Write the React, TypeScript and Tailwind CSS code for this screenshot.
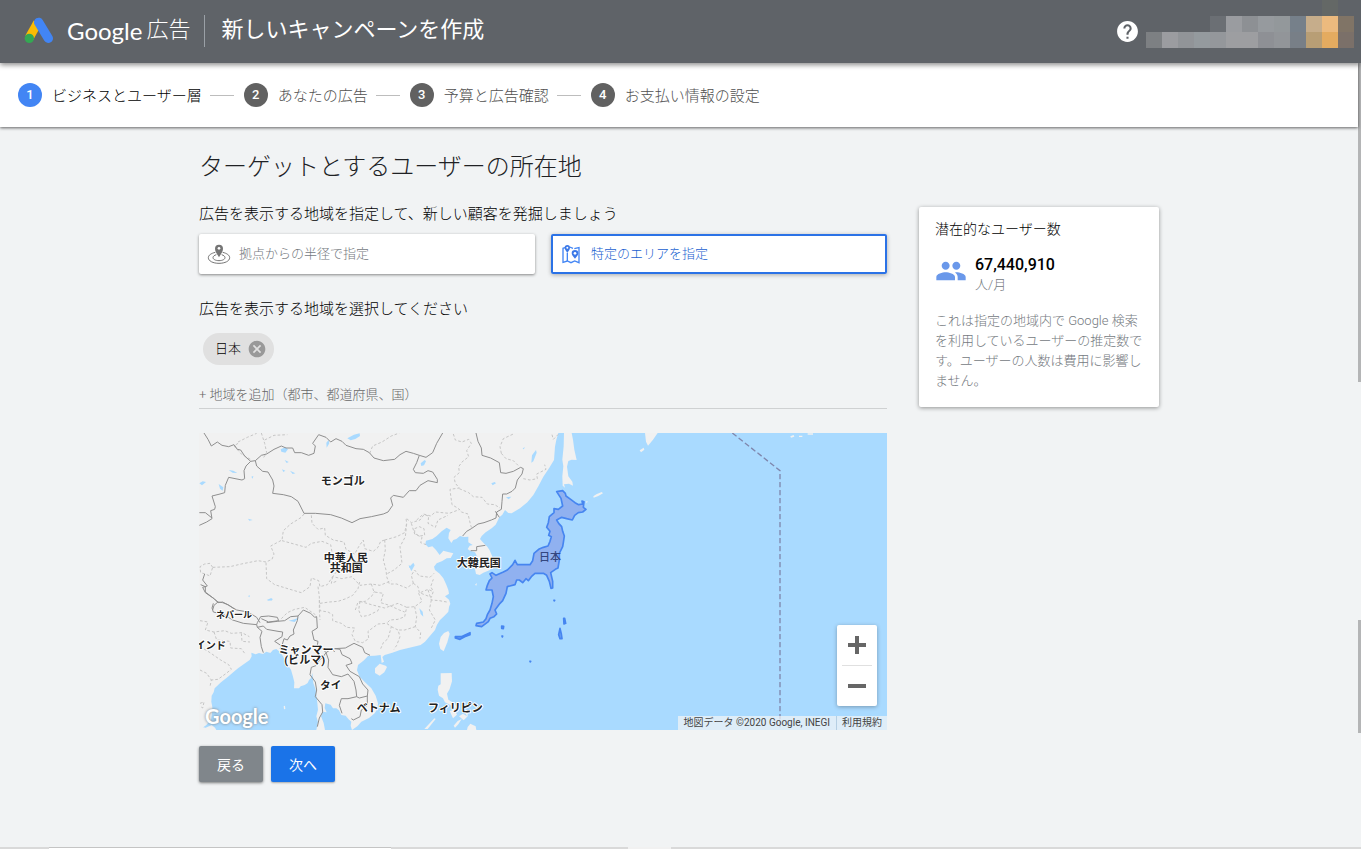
import { Fragment } from 'react'
import { MdCancel, MdHelp, MdPeople } from 'react-icons/md'

const steps = ['ビジネスとユーザー層', 'あなたの広告', '予算と広告確認', 'お支払い情報の設定']

// account area, shown as coloured tiles
const accountTiles = [
  ['bg-transparent', 'bg-transparent', 'bg-[#7d8083]'],
  ['bg-transparent', 'bg-transparent', 'bg-[#9b9ca0]'],
  ['bg-transparent', 'bg-transparent', 'bg-[#919498]'],
  ['bg-transparent', 'bg-transparent', 'bg-[#949a9e]'],
  ['bg-transparent', 'bg-[#6b6f74]', 'bg-[#94979b]'],
  ['bg-transparent', 'bg-[#9a9ca0]', 'bg-[#9d9ea1]'],
  ['bg-transparent', 'bg-[#8d9094]', 'bg-[#9d9ea1]'],
  ['bg-transparent', 'bg-[#969a9e]', 'bg-[#8e9095]'],
  ['bg-transparent', 'bg-[#93989b]', 'bg-[#929599]'],
  ['bg-transparent', 'bg-[#76808a]', 'bg-[#787f87]'],
  ['bg-transparent', 'bg-[#c6ad8b]', 'bg-[#b89e75]'],
  ['bg-[#646866]', 'bg-[#ecba7e]', 'bg-[#e4ab60]'],
  ['bg-transparent', 'bg-[#807466]', 'bg-[#7b7069]'],
]

const AdsLogo = () => (
  <svg width="32" height="30" viewBox="0 0 96 90" aria-hidden="true">
    <path d="M44 20 19 65" stroke="#fbbc04" strokeWidth="27" />
    <circle cx="19" cy="67" r="14" fill="#34a853" />
    <path d="M47 19 76 67" stroke="#4285f4" strokeWidth="28" strokeLinecap="round" />
  </svg>
)

const RadiusIcon = () => (
  <svg width="24" height="24" viewBox="0 0 72 72" fill="none" stroke="#757575" strokeWidth="3" aria-hidden="true">
    <path d="M25 31C12 34 4 40 4 47c0 10 14 17 32 17s32-7 32-17c0-7-8-13-21-16" />
    <path d="M28 38c-6 2-10 5-10 9 0 5 8 9 18 9s18-4 18-9c0-4-4-7-10-9" />
    <path d="M36 46C30 36 24 28 24 20a12 12 0 0 1 24 0c0 8-6 16-12 26z" fill="#757575" stroke="none" />
    <circle cx="36" cy="19" r="4" fill="#fff" stroke="none" />
  </svg>
)

const AreaIcon = () => (
  <svg width="24" height="24" viewBox="0 0 72 72" fill="none" stroke="#4285f4" strokeWidth="4" aria-hidden="true">
    <path d="M18 17 12 19V61L25 57 36 62 47 57 60 62V17L49 19 46 20M32 15 42 19" />
    <path d="M25 32V57" />
    <path d="M25 32C20 26 17 21 17 17a8 8 0 0 1 16 0c0 4-3 9-8 15z" fill="#3b78e7" stroke="none" />
    <circle cx="25" cy="17" r="3" fill="#fff" stroke="none" />
    <path d="M48 50C42 43 38 39 38 34a10 10 0 0 1 20 0c0 5-4 9-10 16z" fill="#3b78e7" stroke="none" />
    <circle cx="48" cy="34" r="4" fill="#fff" stroke="none" />
  </svg>
)

const mapLabels = [
  { text: 'モンゴル', x: 431, y: 144, size: 33 },
  { text: '中華人民', x: 440, y: 376, size: 33 },
  { text: '共和国', x: 442, y: 406, size: 33 },
  { text: '大韓民国', x: 839, y: 391, size: 33 },
  { text: 'ネパール', x: 105, y: 546, size: 27 },
  { text: 'インド', x: 35, y: 638, size: 31 },
  { text: 'ミャンマー', x: 321, y: 652, size: 33 },
  { text: '(ビルマ)', x: 317, y: 681, size: 33 },
  { text: 'タイ', x: 395, y: 757, size: 32 },
  { text: 'ベトナム', x: 539, y: 825, size: 33 },
  { text: 'フィリピン', x: 769, y: 825, size: 33 },
]

const MapDrawing = () => (
  <svg className="block h-full w-full" viewBox="0 0 2064 891" preserveAspectRatio="xMinYMid slice" role="img" aria-label="地図">
    <rect width="2064" height="891" fill="#a9daff" />

    {/* land */}
    <g fill="#f1f1f1">
      <path d="M0 0H1078L1072 20 1068 41 1065 81 1050 106 1033 131 1018 160 1003 186 985 208 963 226 938 241 928 240 918 231 910 245 901 253 890 275 878 286 860 298 848 309 843 318 850 326 865 341 872 352 878 366 883 380 883 396 873 411 853 419 842 426 831 423 828 408 833 391 835 371 828 358 813 353 806 348 812 338 821 336 808 328 808 311 795 312 783 309 772 318 763 321 757 330 748 316 750 300 755 291 743 284 728 295 713 309 700 318 681 323 679 334 688 343 700 340 711 351 722 366 733 353 750 358 763 361 755 375 743 376 730 384 713 391 705 401 708 411 722 422 733 436 742 455 748 471 750 482 738 490 750 500 754 512 750 522 748 536 735 550 723 561 714 575 708 591 692 610 678 626 665 636 653 639 628 645 603 651 580 659 557 666 550 672 555 686 548 690 545 666 527 668 507 669 495 682 477 696 474 712 482 731 498 748 517 766 530 788 537 811 535 828 527 841 510 855 487 866 475 880 459 891 455 878 457 866 448 858 440 848 427 846 420 832 412 826 402 826 395 815 379 811 377 825 383 838 370 836 366 850 374 870 378 891H352L357 868 352 850 357 830 354 800 350 770 343 750 340 720 336 735 330 741 326 750 317 756 305 760 300 766H285L286 748 282 731 276 710 259 686 252 670 242 656 232 648 222 651 214 660 202 656 192 663 180 660 170 664 157 659 158 670 152 681 135 693 117 706 100 720 87 731 66 748 47 766 44 778 38 788 37 806 40 822 39 841 36 860 22 876 5 889 0 891z" />
      <path d="M1095 0H1118L1122 20 1126 50 1133 81 1118 80 1108 84 1104 101 1108 130 1120 146 1122 158 1110 152 1095 154 1098 164 1091 158 1090 130 1093 100 1090 80 1094 40z" />
      <path d="M1183 190 1192 184 1208 177 1212 181 1198 189 1184 194zM1160 206 1166 204 1164 210zM1228 168 1236 164" />
      <path d="M1338 0H1376L1362 20 1347 38 1341 26zM1322 52 1334 44 1336 50 1326 58zM1774 10 1784 6 1786 11 1776 14zM1800 8h10v4h-10zM1826 1h16v4h-16z" />
      <path d="M748 594 752 602 745 628 734 655 724 648 720 632 725 612 735 600z" />
      <path d="M528 706 542 692 560 698 564 702 556 718 542 728 528 720z" />
      <path d="M725 721 758 720 759 745 752 768 744 782 748 800 758 806 768 812 774 826 762 822 750 814 738 808 732 796 720 788 716 770 718 758 725 754z" />
      <path d="M752 834 766 830 774 845 762 856zM780 850 792 842 804 850 798 838 806 832 806 850 794 862zM764 878 776 864 788 858 778 874 768 884zM806 882 814 872 830 880 832 891H804zM676 888 706 856 710 858 686 888z" />
      <path d="M0 880 20 884 38 876 48 884 52 891H0z" />
      <path d="M254 820 258 818 259 828 255 829zM828 455 834 450 832 458z" />
    </g>

    {/* lakes */}
    <g fill="#a9daff" transform="translate(-3 -9)">
      <path d="M448 25 468 14 485 10 486 18 472 27 458 31zM385 38 392 30 394 40 386 53zM248 58 262 52 270 58 262 68 250 65zM260 90 272 96 266 99zM252 118 262 122 256 126zM276 122 292 130 284 132zM92 120 106 122 118 129 104 128zM62 162 76 172 74 182 66 176zM4 160 14 154 24 156 12 166zM160 140 166 138 164 146zM668 100 680 90 684 94 678 106 670 108zM150 266 164 270 154 272z" />
      <path d="M634 410 646 398 650 406 640 424zM632 404 640 412 634 414zM150 498 156 496 154 502zM206 510 220 504 224 510 212 512z" />
      <path d="M1002 76 1014 60 1016 68 1006 94 1000 98zM880 160 890 156 894 160 884 166zM924 202 940 200 932 208zM974 56 980 50 978 58zM664 535 674 545 676 560 668 552z" />
      <path d="M272 572 290 568 304 562 290 576zM212 508 224 506 220 512z" />
    </g>

    {/* prefecture and province lines */}
    <g fill="none" stroke="#c6c6c6" strokeWidth="3" strokeDasharray="8 6">
      <g transform="translate(-3 -9)">
        <path d="M190 9 200 40 206 68 196 84M120 40 108 48 132 74 158 88M120 36 148 22 176 10M200 30 228 16 268 14M515 70 524 48 552 36 580 18 604 9" />
        <path d="M318 252 310 262 278 282 256 302 252 330 218 348 228 372 222 388 204 396M204 396 180 392 130 402 96 410 44 412M340 256 342 280 360 298 380 294 382 316 406 330 438 336 444 358 470 372 482 350 496 330 500 356 526 364 540 352 548 334 560 330M252 332 288 342 324 352 340 340 372 334 398 344 402 366 412 380" />
        <path d="M204 398 206 446 230 464 276 478 310 488 336 470 340 444 362 452 366 470 388 464 404 440 432 446 462 440 486 466 520 462 546 466 580 452M560 330 562 360 556 390 564 420 566 440 574 462 596 462 626 474 646 460M560 330 596 320 620 308 626 280 624 264 640 278 666 270 678 254 692 258 690 280 712 292 720 270 750 256M626 282 622 320 606 350 612 400 588 420 566 432M650 296 664 290 678 296 680 316 664 318 650 310zM640 280 650 312 672 322 668 338 684 344" />
        <path d="M404 440 400 460 420 452M520 462 528 486 556 490 548 518 574 526 604 540 620 546M472 540 480 516 502 514 520 500 530 484M646 460 640 436 650 420 664 438 696 442 708 430M646 460 660 470 664 488 700 502 706 484 698 470 706 448M360 470 364 500 364 540 366 570M44 412 36 400 20 402 6 410 8 428 22 432 36 438 44 412M412 380 430 400 420 420 404 440" />
      </g>
      <g transform="translate(-3 441)">
        <path d="M364 60 366 92 390 96 404 104 404 122 430 130 446 142 470 144 462 164 472 184 494 188 512 176 510 154 540 132 566 130 580 140 570 176 556 188 548 206M366 70 394 66 420 64 444 56 464 46 480 26 486 2M486 64 520 74 560 84 600 70 626 82 620 110 600 118 576 120 566 130M486 64 482 90 490 110 512 106 540 92 544 80M580 140 600 150 606 170 596 196 588 208M626 82 650 80 672 64 662 40 690 28 704 34M650 80 656 110 652 140 668 158 666 176M690 30 700 60 724 62 746 66M652 140 620 150 600 150M700 60 694 90 712 120 700 144" />
        <path d="M6 122 30 126 22 150 48 156 80 152 100 160 132 158 154 170M48 156 56 180 96 184 98 204 130 206 140 220M6 200 30 214 68 240 92 254 100 268 82 282 60 298 40 300M6 270 26 280 40 300 36 320M130 160 132 184 156 186M6 370 18 366 14 384 8 380M250 116 268 98 290 88 320 82 352 104" />
      </g>
      <g transform="translate(603 -9)">
        <path d="M160 12 166 30 186 36 206 28 214 40 200 62 206 80 186 96 176 110 178 128 162 142 166 160 178 174 150 178 152 196 156 224 176 236 184 246 204 252 212 286 216 296M178 176 206 188 220 200 246 202 262 222 284 224 300 234M304 70 300 50 310 26 340 12M304 70 318 86 340 92 358 110M370 146 390 150 412 146 410 132 438 118 434 104M456 14 460 28 476 12M50 270 70 252 92 258 106 246 148 250 180 238" />
      </g>
    </g>

    {/* country borders */}
    <g fill="none" stroke="#8f8f8f" strokeWidth="3" strokeLinejoin="round">
      <g transform="translate(-3 -9)">
        <path d="M18 9 30 28 40 48 58 36 72 46 92 50 108 44 118 58 128 60 140 78 158 94 172 92 190 76 206 72 228 58 250 48 264 54 284 54 290 68 310 68 332 76 348 70 352 48 344 40 362 14 384 22 398 36 414 26 432 34 444 46 474 56 496 58 514 68 528 84 556 92 590 88 606 74 624 64 646 70 664 76 684 82 704 68 716 40 734 9" />
        <path d="M172 92 176 108 194 124 210 126 224 150 228 168 224 190 256 194 280 200 300 214 318 250 352 250 398 254 430 264 462 278 486 266 520 260 556 252 570 246 584 226 578 204 586 196 616 202 634 182 654 182 666 166 690 152 718 158 718 148 704 126 690 122 676 130 652 128 646 118 656 98 664 76" />
        <path d="M158 94 144 108 138 122 140 146 132 150 92 142 82 166 80 188 66 192 42 198 52 230 50 238 38 242 42 266 26 276 4 286M4 248 22 248 42 264" />
        <path d="M20 432 14 450 28 468 14 472 22 488 48 506 60 516 74 518 90 524 110 538M44 540 48 526 60 516" />
      </g>
      <g transform="translate(-3 441)">
        <path d="M8 14 22 20 22 36 48 56 60 68 74 66 96 78 116 90M46 70 42 84 46 96 78 104 104 120 136 130 176 134 178 128 188 110 212 108 238 112 242 122 212 126 190 116M116 90 150 96 176 112 186 128M176 134 178 142 196 138 206 148 240 154 254 156 252 170 230 184 248 196 248 212M178 142 192 154 186 172 190 200 196 218M206 128 238 124 260 122 278 110 300 108 298 122 286 150 288 162 276 168 268 180 258 176 252 196 246 206" />
        <path d="M300 108 316 90 338 100 350 112 356 110 358 144 342 154 348 180 360 184 358 196 374 206 384 218 402 206 410 216M384 218 374 232 364 240 356 256 340 262 336 284 352 306 356 330 352 350 372 374 374 396 364 414 358 440M384 218 392 240 390 262 404 284 430 290 450 282 468 304 474 330 476 350 450 356 430 356 424 376 432 400 M410 206 426 208 432 224 456 236 462 250 444 256 456 274 484 290 494 312 510 330 508 348 484 354 476 350M410 206 442 204 468 190 494 202 500 218 516 226M508 348 508 376 490 390 486 410 466 420 460 416" />
      </g>
      <g transform="translate(603 -9)">
        <path d="M228 9 234 34 244 54 246 76 272 84 298 98 302 128 318 130 340 124 362 112 370 116 366 132 352 150 346 174 336 184 320 192 308 192 306 214 304 238 290 246 288 264 274 270 252 278 234 282 214 296 200 304 188 318M286 244 298 262M212 362 230 362 230 350 256 346" />
      </g>
    </g>

    {/* selected area */}
    <g transform="translate(603 -9)" fill="#5b93f0" fillOpacity="0.8" stroke="#4685f0" strokeWidth="5" strokeLinejoin="round">
      <path fill="#8aa6ec" fillOpacity="0.8" d="M470 185 488 182 496 190 498 198 512 208 525 218 536 224 548 222 546 213 552 215 550 232 558 238 548 246 535 248 524 256 517 270 500 266 485 262 470 270 476 280 485 290 488 304 493 318 490 338 488 350 478 370 478 390 474 414 466 418 452 428 458 454 458 474 453 475 448 454 440 436 430 430 405 430 394 440 385 452 378 446 368 458 358 450 350 450 345 464 322 470 318 490 308 512 300 520 285 540 290 552 282 560 270 565 265 575 245 590 228 587 230 580 250 576 258 566 262 554 270 540 276 520 280 500 276 480 258 480 262 466 268 452 276 444 270 432 276 428 288 436 310 426 322 420 338 404 345 391 352 404 372 404 390 404 398 392 402 370 416 358 430 352 444 348 450 334 454 320 446 316 450 304 440 292 445 278 448 260 462 248 462 236 475 238 488 228 483 205z" />
      <path d="M166 620 184 620 210 608 210 614 194 620 180 628 166 624zM305 588 311 589 310 596 305 595zM306 618 308 618 307 621zM462 511 464 511 463 513zM491 565 494 565 497 580 492 582zM480 595 484 612 486 626 480 626 476 614zM390 694 392 694 391 696z" />
    </g>
    <path d="M1600 0 1743 113V890" fill="none" stroke="#7f87ad" strokeWidth="4" strokeDasharray="16 8" />

    <g fontFamily='Roboto, "Noto Sans CJK JP", sans-serif' textAnchor="middle" dominantBaseline="central">
      {mapLabels.map((label) => (
        <text
          key={label.text}
          x={label.x}
          y={label.y}
          fontSize={label.size}
          fontWeight="700"
          fill="#222"
          stroke="#fff"
          strokeWidth="6"
          strokeLinejoin="round"
          paintOrder="stroke"
        >
          {label.text}
        </text>
      ))}
      <text x="1053" y="373" fontSize="33" fontWeight="500" fill="#34477f">日本</text>
    </g>
  </svg>
)

const Header = () => (
  <header className="relative z-20 flex h-[63px] items-center bg-[#5f6368] pl-[23px] pr-[7px] text-white shadow-[0_2px_5px_rgba(0,0,0,0.45)]">
    <div className="flex items-center pb-0.5">
      <AdsLogo />
      <div className="ml-3 flex items-center text-[22px] leading-8">
        <span className="font-['Lato'] text-[24px]">Google</span>
        <span className="ml-1 pb-0.5 font-light">広告</span>
      </div>
      <div className="ml-3.5 h-8 w-px bg-[#9aa0a6]" />
      <h1 className="ml-4 pb-0.5 text-[22px] font-normal leading-8">新しいキャンペーンを作成</h1>
    </div>
    <button type="button" aria-label="ヘルプ" className="ml-auto">
      <MdHelp size={25} />
    </button>
    <div className="ml-1.5 flex self-start">
      {accountTiles.map((tiles, column) => (
        <div key={column}>
          {tiles.map((tile, row) => (
            <div key={row} className={`h-4 w-4 ${tile}`} />
          ))}
        </div>
      ))}
    </div>
  </header>
)

const Stepper = () => (
  <nav className="relative z-10 bg-white px-[18px] shadow-[0_1px_3px_rgba(0,0,0,0.6)]">
    <ol className="flex h-16 items-center text-[15px]">
      {steps.map((step, index) => (
        <Fragment key={step}>
          {index > 0 && <li aria-hidden="true" className="ml-2 mr-2.5 h-px w-6 bg-[#bdbdbd]" />}
          <li className={`flex items-center gap-2.5 ${index === 0 ? 'text-black' : 'text-[#505050]'}`}>
            <span
              className={`flex h-6 w-6 items-center justify-center rounded-full text-[13px] font-medium text-white ${
                index === 0 ? 'bg-[#4285f4]' : 'bg-[#616161]'
              }`}
            >
              {index + 1}
            </span>
            <span className="pt-0.5 font-light">{step}</span>
          </li>
        </Fragment>
      ))}
    </ol>
  </nav>
)

const TargetMap = () => (
  <div className="relative mt-6 h-[297px] overflow-hidden">
    <MapDrawing />
    <span className="absolute bottom-0 left-1.5 font-['Lato'] text-[20px] font-bold leading-7 text-white [text-shadow:0_0_3px_#777]">
      Google
    </span>
    <div className="absolute bottom-6 right-2.5 flex w-10 flex-col items-center rounded-xs bg-white shadow-[0_1px_4px_rgba(0,0,0,0.3)]">
      <button type="button" aria-label="拡大" className="flex h-10 w-10 items-center justify-center">
        <svg width="18" height="18" viewBox="0 0 18 18" fill="#666">
          <path d="M7 0h4v7h7v4h-7v7H7v-7H0V7h7z" />
        </svg>
      </button>
      <div className="h-px w-[30px] bg-[#e0e0e0]" />
      <button type="button" aria-label="縮小" className="flex h-10 w-10 items-center justify-center">
        <svg width="18" height="18" viewBox="0 0 18 18" fill="#666">
          <path d="M0 7h18v4H0z" />
        </svg>
      </button>
    </div>
    <div className="absolute bottom-0 right-0 flex h-3.5 items-center bg-[#f5f5f5]/70 text-[10px] leading-[14px] text-[#444]">
      <span className="px-1.5">地図データ ©2020 Google, INEGI</span>
      <a href="#terms" className="border-l border-[#b5cfe3] px-[5px]">利用規約</a>
    </div>
  </div>
)

const AudienceCard = () => (
  <aside className="mt-20 w-60 shrink-0 self-start rounded-xs bg-white px-4 pb-4 pt-3 shadow-[0_1px_4px_rgba(0,0,0,0.4)]">
    <h3 className="text-sm font-light leading-5 text-black">潜在的なユーザー数</h3>
    <div className="mt-4 flex gap-2">
      <MdPeople size={32} color="#6a98ea" />
      <div className="leading-5">
        <p className="text-base font-medium leading-5 text-black">67,440,910</p>
        <p className="text-[13px] font-light leading-5 text-[#74797e]">人/月</p>
      </div>
    </div>
    <p className="mt-4 text-[13px] font-light leading-5 text-[#74797e]">
      これは指定の地域内で Google 検索を利用しているユーザーの推定数です。ユーザーの人数は費用に影響しません。
    </p>
  </aside>
)

const App = () => {
  return (
    <div
      lang="ja"
      className="flex min-h-screen flex-col bg-[#f1f3f4] font-['Roboto','Noto_Sans_CJK_JP',sans-serif] text-[#202124]"
    >
      <Header />
      <div className="flex flex-1">
        <div className="min-w-0 flex-1">
          <Stepper />
          <main className="mx-auto flex max-w-[960px] gap-8 pb-10">
            <section className="min-w-0 flex-1 pt-6">
              <h2 className="text-2xl font-light leading-8">ターゲットとするユーザーの所在地</h2>
              <p className="mt-[21px] text-[15px] font-light leading-5 text-black">
                広告を表示する地域を指定して、新しい顧客を発掘しましょう
              </p>
              <div className="mt-2.5 flex gap-4">
                <button
                  type="button"
                  aria-pressed="false"
                  className="flex h-10 flex-1 items-center gap-2 rounded-xs bg-white px-2 text-[13px] font-light text-[#74797e] shadow-[0_1px_3px_rgba(0,0,0,0.45)]"
                >
                  <RadiusIcon />
                  拠点からの半径で指定
                </button>
                <button
                  type="button"
                  aria-pressed="true"
                  className="flex h-10 flex-1 items-center gap-2 rounded-xs bg-white px-2 text-[13px] font-light text-[#1a5fd0] shadow-[0_1px_4px_rgba(0,0,0,0.3)] inset-ring-2 inset-ring-[#2b72e6]"
                >
                  <AreaIcon />
                  特定のエリアを指定
                </button>
              </div>
              <label htmlFor="region" className="mt-[25px] block text-[15px] font-light leading-5 text-black">
                広告を表示する地域を選択してください
              </label>
              <div className="ml-1 mt-3.5 flex">
                <span className="flex h-8 items-center gap-1.5 rounded-full bg-[#e0e0e0] pl-3 pr-[7px] text-[13px] font-light text-black">
                  日本
                  <button type="button" aria-label="日本を削除">
                    <MdCancel size={20} color="#999" />
                  </button>
                </span>
              </div>
              <input
                id="region"
                type="text"
                placeholder="+ 地域を追加（都市、都道府県、国）"
                className="mt-4 block h-7 w-full border-b border-[#cfd1d2] text-[13px] font-light outline-none placeholder:text-[#666]"
              />
              <TargetMap />
              <div className="mt-4 flex gap-2">
                <button
                  type="button"
                  className="h-9 w-16 rounded-xs bg-[#80868b] pt-0.5 text-sm text-white shadow-[0_1px_3px_rgba(0,0,0,0.5)]"
                >
                  戻る
                </button>
                <button
                  type="button"
                  className="h-9 w-16 rounded-xs bg-[#1a73e8] pt-0.5 text-sm text-white shadow-[0_1px_2px_rgba(0,0,0,0.3)]"
                >
                  次へ
                </button>
              </div>
            </section>
            <AudienceCard />
          </main>
        </div>
        {/* scroll track */}
        <div className="flex w-[3px] flex-col">
          <div className="h-[319px] bg-[#b4b5b6]" />
          <div className="mt-[238px] h-[113px] bg-[#b4b5b6]" />
        </div>
      </div>
      <footer className="flex h-0.5 bg-[#d9d9d9]">
        <div className="ml-[49px] w-[342px] border-t border-[#c4c4c4] bg-white" />
        <div className="ml-[237px] w-[43px] bg-[#f1f1f1]" />
      </footer>
    </div>
  )
}

export default App
